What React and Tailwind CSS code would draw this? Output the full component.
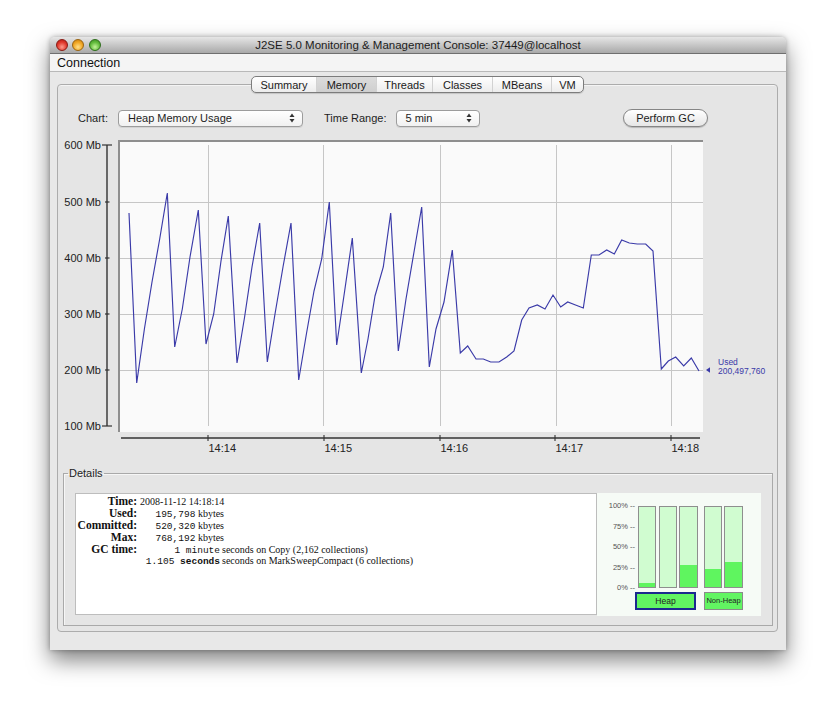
import React from "react";

const pts = [[129,214],[136.7,384],[144.4,330],[152,283],[159.7,240],[167.3,194],[174.7,348],[182.3,310],[190,258],[198.3,211],[206,345],[213.7,315],[221,262],[228.3,217],[237,364],[244.6,318],[252,268],[259.7,224],[267.3,363],[275,315],[283,268],[291,224],[298.7,381],[306.4,335],[314,292],[321.7,260],[329.3,203],[336.7,346],[344.5,293],[352.3,239],[361.3,374],[368,340],[375,297],[383.3,268],[390.7,214],[398.3,352],[406,300],[414,253],[421.7,208],[429.3,368],[436,330],[444,303],[452.3,251],[460.3,354],[467.7,347],[476,360],[483.3,360],[490.7,363],[499,363],[506.7,358],[514,352],[521.7,321],[529,309],[537.3,306],[545,310],[553,296],[560.7,308],[567.7,303],[575.5,306],[583.3,309],[591.3,256],[599,256],[606.7,251],[614.3,255],[621.7,241],[629.3,244],[637.3,245],[645.7,245],[653,252],[661.3,370],[668.3,362],[675.7,358],[683.7,367],[691.3,359],[699,372]];

const yTicks = [
  { l: "600 Mb", y: 146, long: true },
  { l: "500 Mb", y: 203 },
  { l: "400 Mb", y: 259 },
  { l: "300 Mb", y: 315 },
  { l: "200 Mb", y: 371 },
  { l: "100 Mb", y: 427, long: true },
];
const xTicks = [
  { l: "14:14", x: 208 },
  { l: "14:15", x: 324 },
  { l: "14:16", x: 440 },
  { l: "14:17", x: 555 },
  { l: "14:18", x: 671 },
];

function Chart() {
  const line = pts.map((p) => p.join(",")).join(" ");
  return (
    <svg width="710" height="327" viewBox="60 135 710 327" className="block" style={{ fontFamily: '"Liberation Sans", Arial, sans-serif' }}>
      <rect x="118" y="141" width="585" height="292" fill="#fafafa" />
      {[203, 259, 315, 371].map((y) => (
        <line key={y} x1="119" x2="703" y1={y + 0.5} y2={y + 0.5} stroke="#c6c6c6" strokeWidth="1" />
      ))}
      {[208, 323, 440, 556, 671].map((x) => (
        <line key={x} x1={x + 0.5} x2={x + 0.5} y1="146" y2="427" stroke="#c6c6c6" strokeWidth="1" />
      ))}
      <line x1="118" x2="703" y1="142" y2="142" stroke="#8e8e8e" strokeWidth="2" />
      <line x1="119" x2="119" y1="141" y2="433" stroke="#8e8e8e" strokeWidth="2" />
      <polyline points={line} fill="none" stroke="#3a3aa8" strokeWidth="1.15" strokeLinejoin="miter" />
      <line x1="107" x2="107" y1="146" y2="427" stroke="#333" strokeWidth="1.4" />
      {yTicks.map((t) => (
        <g key={t.l}>
          <line x1={t.long ? 102 : 105} x2={t.long ? 112 : 109.5} y1={t.y} y2={t.y} stroke="#333" strokeWidth="1.2" />
          <text x="101" y={t.y + 4} textAnchor="end" fontSize="11" fill="#222">{t.l}</text>
        </g>
      ))}
      <line x1="121" x2="700" y1="439" y2="439" stroke="#333" strokeWidth="1.4" />
      {xTicks.map((t) => (
        <g key={t.l}>
          <line x1={t.x} x2={t.x} y1="436" y2="442" stroke="#333" strokeWidth="1.1" />
          <text x={t.x + 0.5} y="453" fontSize="11" fill="#222">{t.l}</text>
        </g>
      ))}
      <polygon points="706,371 710,368.3 710,373.7" fill="#3a3aa8" />
      <text x="718" y="366" fontSize="8.5" fill="#3a3aa8">Used</text>
      <text x="718" y="374.5" fontSize="8.5" fill="#3a3aa8">200,497,760</text>
    </svg>
  );
}

function Arrows() {
  return (
    <svg width="6" height="10" viewBox="0 0 6 10" className="block">
      <polygon points="3,0.5 5.5,4 0.5,4" fill="#333" />
      <polygon points="3,9.5 5.5,6 0.5,6" fill="#333" />
    </svg>
  );
}

function Select({ label, w }) {
  return (
    <div className={`flex items-center h-[17px] rounded-[4px] border border-[#9c9c9c] bg-gradient-to-b from-white to-[#f1f1f1] shadow-[0_1px_0_rgba(0,0,0,0.08)] pl-[9px] pr-[7px] ${w}`}>
      <span className="flex-1 leading-[15px]">{label}</span>
      <Arrows />
    </div>
  );
}

function Bar({ pct }) {
  return (
    <div className="w-[18.4px] h-[82px] border border-[#8e8e8e] bg-[#d0fcd0] flex flex-col justify-end">
      <div className="bg-[#5ff55f]" style={{ height: `${pct}%` }} />
    </div>
  );
}

export default function App() {
  const tabs = [
    { l: "Summary", w: "w-[64px]" },
    { l: "Memory", w: "w-[60px]", sel: true },
    { l: "Threads", w: "w-[56px]" },
    { l: "Classes", w: "w-[60px]" },
    { l: "MBeans", w: "w-[59px]" },
    { l: "VM", w: "w-[32px]" },
  ];
  return (
    <div className="w-[835px] h-[712px] bg-white overflow-hidden pt-[37px] pl-[50px]" style={{ fontFamily: '"Liberation Sans", Arial, sans-serif' }}>
      <div className="w-[736px] h-[613px] flex flex-col rounded-t-[5px] bg-[#e8e8e8] shadow-[0_10px_22px_rgba(0,0,0,0.5),0_0_5px_rgba(0,0,0,0.3)]">
        {/* Title bar */}
        <div className="h-[17px] flex items-center rounded-t-[5px] bg-gradient-to-b from-[#e6e6e6] to-[#a9a9a9] border-b border-[#6f6f6f]">
          <div className="flex items-center gap-[4.6px] pl-[5.5px] w-[60px]">
            <div className="w-[12px] h-[12px] rounded-full border border-[#8a1b14] bg-[radial-gradient(circle_at_50%_70%,#ff9b8c,#e0392c_55%,#b3170f)]" />
            <div className="w-[12px] h-[12px] rounded-full border border-[#9a6410] bg-[radial-gradient(circle_at_50%_70%,#ffe08a,#f1a623_55%,#c27a0c)]" />
            <div className="w-[12px] h-[12px] rounded-full border border-[#2e6e1a] bg-[radial-gradient(circle_at_50%_70%,#c4f49a,#62bb3c_55%,#3c8c1f)]" />
          </div>
          <div className="flex-1 text-center text-[11.5px] text-[#1c1c1c] leading-[16px]">
            J2SE 5.0 Monitoring &amp; Management Console: 37449@localhost
          </div>
          <div className="w-[60px]" />
        </div>
        {/* Menu bar */}
        <div className="h-[18px] flex items-center bg-[#f4f4f4] border-b border-[#b9b9b9] pl-[7px] pt-[2px] text-[12.5px] text-[#111]">
          Connection
        </div>
        {/* Body */}
        <div className="flex-1 pt-[12px] pl-[7px] pr-[8px] pb-[18px] flex flex-col">
          <div className="flex-1 rounded-[4px] border border-[#acacac] bg-[#e5e5e5] flex flex-col shadow-[inset_0_1px_0_#f4f4f4]">
            {/* Tabs */}
            <div className="-mt-[9px] flex justify-center">
              <div className="flex h-[17px] rounded-[5px] border border-[#7c7c7c] overflow-hidden bg-gradient-to-b from-white to-[#ececec] shadow-[0_1px_1px_rgba(0,0,0,0.15)]">
                {tabs.map((t, i) => (
                  <div
                    key={t.l}
                    className={`${t.w} text-center text-[11px] leading-[16px] text-[#1a1a1a] ${i > 0 ? "border-l border-[#d2d2d2]" : ""} ${t.sel ? "bg-gradient-to-b from-[#dcdcdc] to-[#cfcfcf]" : ""}`}
                  >
                    {t.l}
                  </div>
                ))}
              </div>
            </div>
            {/* Controls */}
            <div className="mt-[16px] h-[18px] flex items-center pl-[20px] text-[11px] text-[#1e1e1e]">
              <span>Chart:</span>
              <div className="ml-[10px]"><Select label="Heap Memory Usage" w="w-[185px]" /></div>
              <span className="ml-[21px]">Time Range:</span>
              <div className="ml-[9px]"><Select label="5 min" w="w-[84px]" /></div>
              <div className="ml-auto mr-[69px] w-[85px] h-[18px] rounded-full border border-[#858585] bg-gradient-to-b from-white to-[#e6e6e6] shadow-[0_1px_1px_rgba(0,0,0,0.2)] flex items-center justify-center leading-[16px]">
                Perform GC
              </div>
            </div>
            {/* Chart */}
            <div className="mt-[7px] ml-[2px]">
              <Chart />
            </div>
            {/* Details */}
            <fieldset className="mt-[6px] ml-[5px] mr-[5px] border border-[#a9a9a9] shadow-[inset_1px_1px_0_#f6f6f6] px-[11px] pt-[13px] pb-[9px]">
              <legend className="-ml-[7px] text-[11px] leading-[13px] text-[#1e1e1e] px-[1px]">Details</legend>
              <div className="flex">
                <div className="w-[522px] h-[122px] bg-white border border-[#bdbdbd] pt-[1px] text-[#111]" style={{ fontFamily: '"Liberation Serif", "Times New Roman", serif' }}>
                  <Row label="Time:"><V w="w-[84px]">2008-11-12 14:18:14</V></Row>
                  <Row label="Used:"><V w="w-[84px]"><M>195,798</M> kbytes</V></Row>
                  <Row label="Committed:"><V w="w-[84px]"><M>520,320</M> kbytes</V></Row>
                  <Row label="Max:"><V w="w-[84px]"><M>768,192</M> kbytes</V></Row>
                  <Row label="GC time:">
                    <V w="w-[80px]"><M>1 minute</M></V>
                    <span className="ml-[2px] text-[10px]">seconds on Copy (2,162 collections)</span>
                  </Row>
                  <Row label="">
                    <V w="w-[80px]"><M>1.105 </M><M bold>seconds</M></V>
                    <span className="ml-[2px] text-[10px]">seconds on MarkSweepCompact (6 collections)</span>
                  </Row>
                </div>
                <div className="w-[164px] h-[123px] bg-[#f6fbf6] flex pt-[8px]">
                  <div className="w-[38px] h-[92px] flex flex-col justify-between text-right text-[7.5px] leading-[10px] text-[#555]">
                    <span>100% --</span>
                    <span>75% --</span>
                    <span>50% --</span>
                    <span>25% --</span>
                    <span>0% --</span>
                  </div>
                  <div className="ml-[3px] mt-[5px] flex flex-col">
                    <div className="flex gap-[2.2px]">
                      <Bar pct={5} />
                      <Bar pct={0} />
                      <Bar pct={27} />
                    </div>
                    <div className="mt-[4px] -ml-[3px] w-[61px] h-[18px] border-2 border-[#1b2a8e] bg-[#62f562] text-center text-[8.5px] leading-[14px] text-[#222]">Heap</div>
                  </div>
                  <div className="ml-[6.5px] mt-[5px] flex flex-col">
                    <div className="flex gap-[2px]">
                      <Bar pct={23} />
                      <Bar pct={31} />
                    </div>
                    <div className="mt-[4px] w-[39px] h-[18px] border border-[#8a8a8a] bg-[#62f562] text-center text-[7.5px] leading-[16px] text-[#222] whitespace-nowrap overflow-hidden">Non-Heap</div>
                  </div>
                </div>
              </div>
            </fieldset>
          </div>
        </div>
      </div>
    </div>
  );
}

function Row({ label, children }) {
  return (
    <div className="flex items-baseline h-[12.1px] leading-[12px]">
      <div className="w-[61px] text-right font-bold text-[11.5px] whitespace-nowrap">{label}</div>
      <div className="ml-[3px] flex items-baseline whitespace-nowrap">{children}</div>
    </div>
  );
}

function V({ w, children }) {
  return <span className={`${w} text-right text-[10px] whitespace-pre inline-block`}>{children}</span>;
}

function M({ children, bold }) {
  return (
    <span className={`text-[9.5px] whitespace-pre ${bold ? "font-bold" : ""}`} style={{ fontFamily: '"Liberation Mono", "Courier New", monospace' }}>
      {children}
    </span>
  );
}
